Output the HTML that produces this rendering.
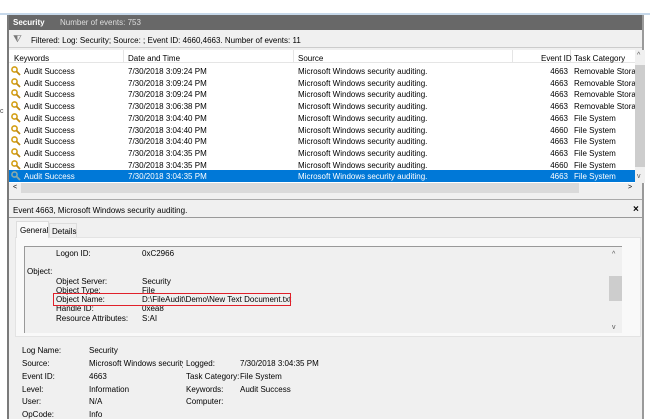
<!DOCTYPE html><html><head><style>
body{margin:0;width:650px;height:419px;overflow:hidden;background:#fff;font-family:"Liberation Sans",sans-serif;font-size:8px;color:#000;position:relative}
div{position:absolute;box-sizing:border-box}
.t{white-space:nowrap}
</style></head><body>
<div style="left:0;top:0;width:650px;height:13px;background:#fff"></div>
<div style="left:0;top:13px;width:650px;height:2px;background:#c6d8ea"></div>
<div style="left:7px;top:15px;width:2px;height:404px;background:#7a7a7a"></div>
<div style="left:9px;top:15px;width:633px;height:404px;background:#f0f0f0"></div>
<div style="left:642px;top:15px;width:2px;height:404px;background:#9a9a9a"></div>
<div style="left:0;top:108px;font-size:7px;color:#444" class="t">c</div>
<div style="left:9px;top:15px;width:633px;height:15px;background:#686868;color:#fff"><span class="t" style="position:absolute;left:4px;top:3px;font-weight:bold">Security</span><span class="t" style="position:absolute;left:51px;top:3px;color:#ddd">Number of events: 753</span></div>
<div style="left:9px;top:31px;width:633px;height:17px;background:#f0f0f0;border-bottom:1px solid #ccc"></div>
<div style="left:13px;top:34px;font-size:10px;color:#777">&#x29E8;</div>
<div style="left:31px;top:36px" class="t">Filtered: Log: Security; Source: ; Event ID: 4660,4663. Number of events: 11</div>
<div style="left:9px;top:50px;width:626px;height:133px;background:#fff"></div>
<div style="left:9px;top:50px;width:626px;height:13px;border-bottom:1px solid #e5e5e5"></div>
<div style="left:123px;top:50px;width:1px;height:13px;background:#e5e5e5"></div>
<div style="left:293px;top:50px;width:1px;height:13px;background:#e5e5e5"></div>
<div style="left:512px;top:50px;width:1px;height:13px;background:#e5e5e5"></div>
<div style="left:570px;top:50px;width:1px;height:13px;background:#e5e5e5"></div>
<div style="left:14px;top:54px" class="t">Keywords</div>
<div style="left:128px;top:54px" class="t">Date and Time</div>
<div style="left:298px;top:54px" class="t">Source</div>
<div style="left:541px;top:54px" class="t">Event ID</div>
<div style="left:574px;top:54px" class="t">Task Category</div>
<div style="left:635px;top:50px;width:10px;height:133px;background:#f0f0f0"></div>
<div style="left:635px;top:65px;width:10px;height:102px;background:#cdcdcd"></div>
<div style="left:637px;top:52px;font-size:7px;color:#555">^</div>
<div style="left:637px;top:173px;font-size:7px;color:#555">v</div>
<div id="rows" style="left:9px;top:65px;width:626px;height:118px;overflow:hidden"></div>
<div style="left:9px;top:183px;width:626px;height:10px;background:#f0f0f0"></div>
<div style="left:21px;top:183px;width:558px;height:10px;background:#dadada"></div>
<div style="left:13px;top:184px;font-size:7px">&lt;</div>
<div style="left:628px;top:184px;font-size:7px">&gt;</div>
<div style="left:9px;top:199px;width:633px;height:1px;background:#aaa"></div>
<div style="left:13px;top:206px;font-size:8px" class="t">Event 4663, Microsoft Windows security auditing.</div>
<div style="left:633px;top:204px;font-size:10px;font-weight:bold">×</div>
<div style="left:9px;top:217px;width:633px;height:1px;background:#999"></div>
<div style="left:15px;top:237px;width:626px;height:100px;background:#f9f9f9;border:1px solid #e3e3e3"></div>
<div style="left:16px;top:221px;width:33px;height:17px;background:#f9f9f9;border:1px solid #ddd;border-bottom:none"></div>
<div style="left:20px;top:226px" class="t">General</div>
<div style="left:49px;top:223px;width:28px;height:14px;border:1px solid #ddd;border-bottom:none;background:#f0f0f0"></div>
<div style="left:52px;top:227px" class="t">Details</div>
<div style="left:24px;top:246px;width:598px;height:87px;background:#f0f0f0;border-left:1px solid #999;border-top:1px solid #999;overflow:hidden">
<div style="left:31px;top:2px" class="t">Logon ID:</div><div style="left:117px;top:2px" class="t">0xC2966</div>
<div style="left:2px;top:20px" class="t">Object:</div>
<div style="left:31px;top:30px" class="t">Object Server:</div><div style="left:117px;top:30px" class="t">Security</div>
<div style="left:31px;top:39px" class="t">Object Type:</div><div style="left:117px;top:39px" class="t">File</div>
<div style="left:31px;top:48px" class="t">Object Name:</div><div style="left:117px;top:48px" class="t">D:\FileAudit\Demo\New Text Document.txt</div>
<div style="left:31px;top:57px" class="t">Handle ID:</div><div style="left:117px;top:57px" class="t">0xea8</div>
<div style="left:31px;top:67px" class="t">Resource Attributes:</div><div style="left:117px;top:67px" class="t">S:AI</div>
<div style="left:584px;top:0;width:13px;height:87px;background:#f0f0f0"></div>
<div style="left:584px;top:29px;width:13px;height:25px;background:#cdcdcd"></div>
<div style="left:587px;top:4px;font-size:7px;color:#555">^</div>
<div style="left:587px;top:77px;font-size:7px;color:#555">v</div>
</div>
<div style="left:53px;top:293px;width:238px;height:13px;border:1.5px solid #e0202a"></div>
<div style="left:22px;top:346px" class="t">Log Name:</div><div style="left:89px;top:346px" class="t">Security</div>
<div style="left:22px;top:359px" class="t">Source:</div><div style="left:89px;top:359px;width:94px;overflow:hidden" class="t">Microsoft Windows security auditing.</div><div style="left:180px;top:359px" class="t">.</div>
<div style="left:186px;top:359px" class="t">Logged:</div><div style="left:240px;top:359px" class="t">7/30/2018 3:04:35 PM</div>
<div style="left:22px;top:372px" class="t">Event ID:</div><div style="left:89px;top:372px" class="t">4663</div>
<div style="left:186px;top:372px" class="t">Task Category:</div><div style="left:240px;top:372px" class="t">File System</div>
<div style="left:22px;top:385px" class="t">Level:</div><div style="left:89px;top:385px" class="t">Information</div>
<div style="left:186px;top:385px" class="t">Keywords:</div><div style="left:240px;top:385px" class="t">Audit Success</div>
<div style="left:22px;top:397px" class="t">User:</div><div style="left:89px;top:397px" class="t">N/A</div>
<div style="left:186px;top:397px" class="t">Computer:</div>
<div style="left:22px;top:410px" class="t">OpCode:</div><div style="left:89px;top:410px" class="t">Info</div>
<script>
var d=[["7/30/2018 3:09:24 PM","4663","Removable Storage"],["7/30/2018 3:09:24 PM","4663","Removable Storage"],["7/30/2018 3:09:24 PM","4663","Removable Storage"],["7/30/2018 3:06:38 PM","4663","Removable Storage"],["7/30/2018 3:04:40 PM","4663","File System"],["7/30/2018 3:04:40 PM","4660","File System"],["7/30/2018 3:04:40 PM","4663","File System"],["7/30/2018 3:04:35 PM","4663","File System"],["7/30/2018 3:04:35 PM","4660","File System"],["7/30/2018 3:04:35 PM","4663","File System"]];
var h="";d.forEach(function(r,i){var s=i==9,y=i*11.7,c=s?"#fff":"#000";
h+='<div style="left:0;top:'+y+'px;width:626px;height:11.7px;'+(s?'background:#0078d7;':'')+'color:'+c+'">'+
'<svg style="position:absolute;left:2px;top:1px" width="10" height="10" viewBox="0 0 10 10"><circle cx="3.5" cy="3.5" r="2.6" fill="none" stroke="'+(s?'#8aa':'#d4a017')+'" stroke-width="1.6"/><path d="M5.3 5.3L9 9" stroke="'+(s?'#8aa':'#c08a10')+'" stroke-width="1.8"/></svg>'+
'<span class="t" style="position:absolute;left:15px;top:2px">Audit Success</span><span class="t" style="position:absolute;left:119px;top:2px">'+r[0]+'</span><span class="t" style="position:absolute;left:289px;top:2px">Microsoft Windows security auditing.</span><span class="t" style="position:absolute;right:67px;top:2px">'+r[1]+'</span><span class="t" style="position:absolute;left:565px;top:2px">'+r[2]+'</span></div>';});
document.getElementById("rows").innerHTML=h;
</script>
</body></html>
